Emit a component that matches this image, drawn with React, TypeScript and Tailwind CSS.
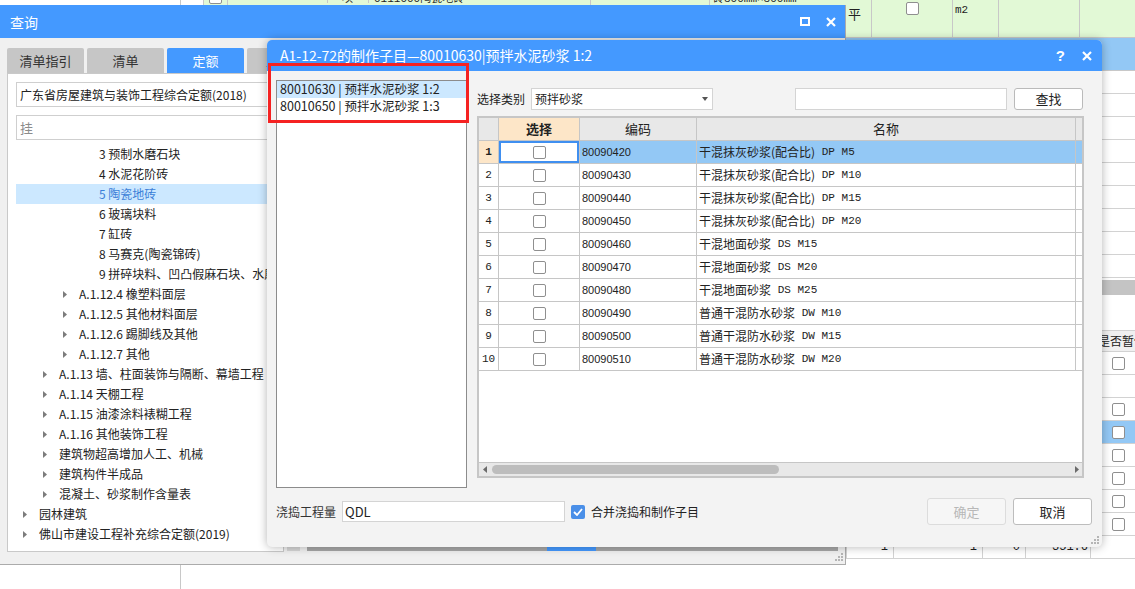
import React from "react";

type TreeItem = { level: number; text: string; arrow?: boolean; active?: boolean };

const treeItems: TreeItem[] = [
  { level: 3, text: "3 预制水磨石块" },
  { level: 3, text: "4 水泥花阶砖" },
  { level: 3, text: "5 陶瓷地砖", active: true },
  { level: 3, text: "6 玻璃块料" },
  { level: 3, text: "7 缸砖" },
  { level: 3, text: "8 马赛克(陶瓷锦砖)" },
  { level: 3, text: "9 拼碎块料、凹凸假麻石块、水磨石" },
  { level: 2, text: "A.1.12.4 橡塑料面层", arrow: true },
  { level: 2, text: "A.1.12.5 其他材料面层", arrow: true },
  { level: 2, text: "A.1.12.6 踢脚线及其他", arrow: true },
  { level: 2, text: "A.1.12.7 其他", arrow: true },
  { level: 1, text: "A.1.13 墙、柱面装饰与隔断、幕墙工程", arrow: true },
  { level: 1, text: "A.1.14 天棚工程", arrow: true },
  { level: 1, text: "A.1.15 油漆涂料裱糊工程", arrow: true },
  { level: 1, text: "A.1.16 其他装饰工程", arrow: true },
  { level: 1, text: "建筑物超高增加人工、机械", arrow: true },
  { level: 1, text: "建筑构件半成品", arrow: true },
  { level: 1, text: "混凝土、砂浆制作含量表", arrow: true },
  { level: 0, text: "园林建筑", arrow: true },
  { level: 0, text: "佛山市建设工程补充综合定额(2019)", arrow: true },
];

const indent = ["pl-[7px]", "pl-[27px]", "pl-[47px]", "pl-[67px]"];

const rows = [
  ["80090420", "干混抹灰砂浆(配合比)", "DP M5"],
  ["80090430", "干混抹灰砂浆(配合比)", "DP M10"],
  ["80090440", "干混抹灰砂浆(配合比)", "DP M15"],
  ["80090450", "干混抹灰砂浆(配合比)", "DP M20"],
  ["80090460", "干混地面砂浆", "DS M15"],
  ["80090470", "干混地面砂浆", "DS M20"],
  ["80090480", "干混地面砂浆", "DS M25"],
  ["80090490", "普通干混防水砂浆", "DW M10"],
  ["80090500", "普通干混防水砂浆", "DW M15"],
  ["80090510", "普通干混防水砂浆", "DW M20"],
];

const Box = () => (
  <span className="block h-[13px] w-[13px] rounded-[2px] border border-[#8f8f8f] bg-white" />
);

const XMark = () => (
  <svg width="10" height="10" viewBox="0 0 10 10">
    <path d="M1 1 L9 9 M9 1 L1 9" stroke="white" strokeWidth="2.2" />
  </svg>
);

const Grip = ({ className }: { className: string }) => (
  <svg className={className} width="8" height="8" viewBox="0 0 8 8">
    {[
      [6, 0],
      [3, 3],
      [6, 3],
      [0, 6],
      [3, 6],
      [6, 6],
    ].map(([x, y]) => (
      <rect key={`${x}-${y}`} x={x} y={y} width="2" height="2" fill="#b5b5b5" />
    ))}
  </svg>
);

// the application window behind both dialogs
function BackgroundApp() {
  return (
    <div className="absolute inset-0 flex flex-col bg-white font-['Liberation_Mono',monospace] text-[11px] text-[#222]">
      <div className="flex h-[38px] shrink-0">
        <div className="w-[181px] shrink-0 border-r border-[#c8c8c8]" />
        <div className="w-[22px] shrink-0" />
        <div className="flex flex-1 items-start overflow-hidden border-b border-[#c8c8c8] bg-[#e2f9d6] leading-[12px]">
          <div className="flex h-full w-[25px] shrink-0 justify-center border-x border-[#c8c8c8]">
            <span className="-mt-[9px] block h-[13px] w-[13px] rounded-[2px] border border-[#8f8f8f] bg-white" />
          </div>
          <div className="-mt-[9px] w-[100px] shrink-0 border-r border-[#c8c8c8] pl-[4px]">0111000000001</div>
          <div className="-mt-[9px] w-[41px] shrink-0 border-r border-[#c8c8c8] pl-[14px] font-['Noto_Sans_CJK_SC']">项</div>
          <div className="-mt-[9px] w-[222px] shrink-0 border-r border-[#c8c8c8] pl-[5px]">
            0111000<span className="font-['Noto_Sans_CJK_SC']">陶瓷地砖</span>
          </div>
          <div className="h-full w-[119px] shrink-0 border-r border-[#c8c8c8]" />
          <div className="-mt-[9px] w-[136px] shrink-0 pl-[3px]">
            <span className="font-['Noto_Sans_CJK_SC']">砖</span>300mm×300mm
          </div>
          <div className="h-full w-[26px] shrink-0 border-r border-[#c8c8c8] pt-[8px] pl-[2px] font-['Noto_Sans_CJK_SC'] text-[13px]">
            平
          </div>
          <div className="flex h-full w-[81px] shrink-0 justify-center border-r border-[#c8c8c8] pt-[2px]">
            <Box />
          </div>
          <div className="h-full w-[46px] shrink-0 border-r border-[#c8c8c8] pt-[4px] pl-[2px]">m2</div>
          <div className="h-full w-[81px] shrink-0 border-r border-[#c8c8c8]" />
          <div className="flex-1" />
        </div>
      </div>
      <div className="flex h-[33px] shrink-0">
        <div className="w-[846px] shrink-0" />
        <div className="flex-1 border-b border-[#c8c8c8] bg-[#93c8f5]" />
      </div>
      {Array.from({ length: 9 }).map((_, i) => (
        <div key={i} className="flex h-[23px] shrink-0">
          <div className="w-[846px] shrink-0" />
          <div className="flex-1 border-b border-[#d2d2d2]" />
        </div>
      ))}
      <div className="h-[2px] shrink-0" />
      <div className="flex h-[15px] shrink-0">
        <div className="w-[846px] shrink-0" />
        <div className="flex-1 bg-[#c4c4c4]" />
      </div>
      <div className="h-[35px] shrink-0" />
      <div className="flex h-[22px] shrink-0">
        <div className="w-[1090px] shrink-0" />
        <div className="flex flex-1 items-center whitespace-nowrap border-y border-[#d2d2d2] bg-[#f0f0f0] pl-[8px] font-['Noto_Sans_CJK_SC'] text-[12px]">
          是否暂估
        </div>
      </div>
      {Array.from({ length: 8 }).map((_, i) => (
        <div key={i} className="flex h-[23px] shrink-0">
          <div className="w-[1090px] shrink-0" />
          <div
            className={`flex flex-1 items-center justify-center border-b border-l border-[#d2d2d2] pl-[10px] ${
              i === 3 ? "bg-[#93c8f5]" : ""
            }`}
          >
            {i !== 1 && <Box />}
          </div>
        </div>
      ))}
      <div className="flex h-[23px] shrink-0 text-[12px]">
        <div className="w-[846px] shrink-0" />
        <div className="flex w-[47px] shrink-0 items-center justify-end border-b border-l border-[#d2d2d2] pr-[5px]">1</div>
        <div className="flex w-[89px] shrink-0 items-center justify-end border-b border-l border-[#d2d2d2] pr-[5px]">1</div>
        <div className="flex w-[43px] shrink-0 items-center justify-end border-b border-l border-[#d2d2d2] pr-[5px]">0</div>
        <div className="flex w-[65px] shrink-0 items-center justify-end border-b border-l border-[#d2d2d2] pr-[2px]">351.6</div>
        <div className="flex-1 border-b border-l border-[#d2d2d2]" />
      </div>
      <div className="flex flex-1">
        <div className="w-[181px] shrink-0 border-r border-[#c8c8c8]" />
      </div>
    </div>
  );
}

function QueryWindow() {
  const tabs = ["清单指引", "清单", "定额", "人材机"];
  return (
    <div className="absolute left-0 top-[5px] flex h-[560px] w-[846px] flex-col border-b border-r border-[#ababab] bg-[#f0f0f0]">
      <div className="flex h-[33px] shrink-0 items-center justify-between bg-[#4499ff] pl-[10px] pr-[9px] text-white">
        <span className="text-[14px] leading-none">查询</span>
        <div className="flex items-center gap-[16px]">
          <span className="block h-[9px] w-[10px] border-2 border-white" />
          <XMark />
        </div>
      </div>
      <div className="flex flex-1 items-start gap-[3px] px-[7px] pt-[10px]">
        <div className="flex w-[277px] shrink-0 flex-col">
          <div className="flex h-[25px] gap-[3px] text-[13px]">
            {tabs.map((t) => (
              <div
                key={t}
                className={`flex w-[77px] shrink-0 items-center justify-center rounded-t-[2px] ${
                  t === "定额" ? "bg-[#4499ff] text-white" : "bg-[#c6c6c6] text-[#333]"
                }`}
              >
                {t}
              </div>
            ))}
          </div>
          <div className="flex h-[479px] flex-col overflow-hidden border border-[#c9c9c9] bg-white px-[8px] pt-[8px]">
            <div className="flex h-[25px] shrink-0 items-center whitespace-nowrap border border-[#cfcfcf] px-[3px] text-[12px]">
              广东省房屋建筑与装饰工程综合定额(2018)
            </div>
            <div className="mt-[8px] flex h-[25px] shrink-0 items-center border border-[#cfcfcf] px-[3px] text-[13px] text-[#8c8c8c]">
              挂
            </div>
            <div className="mt-[4px] flex flex-col text-[12px]">
              {treeItems.map((it) => (
                <div
                  key={it.text}
                  className={`flex h-[20px] shrink-0 items-center whitespace-nowrap ${indent[it.level]} ${
                    it.active ? "bg-[#cce8ff] text-[#3b7fd8]" : "text-[#222]"
                  }`}
                >
                  {it.arrow ? (
                    <svg className="mr-[12px] shrink-0" width="4" height="7" viewBox="0 0 4 7">
                      <polygon points="0,0 4,3.5 0,7" fill="#7c7c7c" />
                    </svg>
                  ) : (
                    <span className="w-[16px] shrink-0" />
                  )}
                  {it.text}
                </div>
              ))}
            </div>
          </div>
        </div>
        <div className="flex h-[503px] flex-1 flex-col justify-end">
          <div className="flex h-[5px]">
            <div className="w-[13px] bg-[#d6d6d6]" />
            <div className="w-[7px]" />
            <div className="w-[240px] bg-[#a7a7a7]" />
            <div className="w-[49px] bg-[#4499ff]" />
            <div className="flex-1 bg-[#a7a7a7]" />
          </div>
        </div>
      </div>
      <Grip className="absolute bottom-[3px] right-[2px]" />
    </div>
  );
}

function SubItemDialog() {
  return (
    <div className="absolute left-[267px] top-[40px] flex h-[507px] w-[835px] flex-col overflow-hidden rounded-[5px] bg-[#f3f3f3] shadow-[0_0_10px_rgba(0,0,0,0.3)]">
      <div className="flex h-[31px] shrink-0 items-center justify-between bg-[#4499ff] pl-[13px] pr-[10px] text-white">
        <span className="whitespace-nowrap text-[14px]">A1-12-72的制作子目—80010630|预拌水泥砂浆 1:2</span>
        <div className="flex items-center gap-[17px]">
          <span className="font-['Liberation_Sans',sans-serif] text-[15px] font-bold leading-none">?</span>
          <XMark />
        </div>
      </div>
      <div className="flex flex-1 flex-col pl-[9px] pr-[10px] pt-[9px]">
        <div className="flex h-[408px] shrink-0 gap-[10px]">
          <div className="flex w-[191px] shrink-0 flex-col border border-[#8c8c8c] bg-white text-[12.5px]">
            <div className="flex h-[17px] items-center bg-[#cce8ff] pl-[3px] whitespace-nowrap">80010630 | 预拌水泥砂浆 1:2</div>
            <div className="flex h-[17px] items-center pl-[3px] whitespace-nowrap">80010650 | 预拌水泥砂浆 1:3</div>
          </div>
          <div className="flex flex-1 flex-col pr-[8px]">
            <div className="mt-[8px] flex h-[22px] shrink-0 items-center text-[12px]">
              <span className="w-[54px] shrink-0">选择类别</span>
              <div className="flex h-[22px] w-[182px] shrink-0 items-center justify-between border border-[#d4d4d4] bg-white pl-[3px] pr-[4px]">
                <span>预拌砂浆</span>
                <svg width="6" height="4" viewBox="0 0 6 4">
                  <polygon points="0,0 6,0 3,4" fill="#555" />
                </svg>
              </div>
              <div className="flex-1" />
              <div className="h-[22px] w-[212px] shrink-0 border border-[#d4d4d4] bg-white" />
              <div className="ml-[7px] mr-[1px] flex h-[22px] w-[69px] shrink-0 items-center justify-center rounded-[3px] border border-[#bababa] bg-white text-[13px]">
                查找
              </div>
            </div>
            <div className="mt-[6px] flex h-[362px] flex-col border-2 border-[#c6c6c6] bg-white">
              <div className="flex h-[23px] shrink-0 border-b border-[#c6c6c6] bg-[#e8e8e8] text-[13px]">
                <div className="w-[20px] shrink-0 border-r border-[#c6c6c6]" />
                <div className="flex w-[81px] shrink-0 items-center justify-center border-r border-[#c6c6c6] bg-[#fde6c8] font-bold">
                  选择
                </div>
                <div className="flex w-[117px] shrink-0 items-center justify-center border-r border-[#c6c6c6]">编码</div>
                <div className="flex w-[379px] shrink-0 items-center justify-center border-r border-[#c6c6c6]">名称</div>
                <div className="flex-1" />
              </div>
              {rows.map(([code, name, grade], i) => {
                const sel = i === 0;
                return (
                  <div
                    key={code}
                    className={`flex h-[23px] shrink-0 border-b border-[#c6c6c6] ${sel ? "bg-[#93c8f5]" : "bg-white"}`}
                  >
                    <div
                      className={`flex w-[20px] shrink-0 items-center justify-center border-r border-[#c6c6c6] font-['Liberation_Mono',monospace] text-[11px] ${
                        sel ? "bg-[#fde6c8] font-bold" : "bg-white"
                      }`}
                    >
                      {i + 1}
                    </div>
                    <div
                      className={`flex w-[81px] shrink-0 items-center justify-center border-r border-[#c6c6c6] bg-white ${
                        sel ? "shadow-[inset_0_0_0_2px_#3f8ff0]" : ""
                      }`}
                    >
                      <Box />
                    </div>
                    <div className="flex w-[117px] shrink-0 items-center border-r border-[#c6c6c6] pl-[2px] font-['Liberation_Sans',sans-serif] text-[11px]">
                      {code}
                    </div>
                    <div className="flex w-[379px] shrink-0 items-center whitespace-nowrap border-r border-[#c6c6c6] pl-[2px]">
                      <span className="text-[12px]">{name}</span>
                      <span className="font-['Liberation_Mono',monospace] text-[11px]">&nbsp;{grade}</span>
                    </div>
                    <div className="flex-1" />
                  </div>
                );
              })}
              <div className="flex-1" />
              <div className="flex h-[14px] shrink-0 items-center border-t border-[#c6c6c6] bg-[#e8e8e8] pl-[4px] pr-[3px]">
                <svg width="4" height="7" viewBox="0 0 4 7">
                  <polygon points="4,0 0,3.5 4,7" fill="#6b6b6b" />
                </svg>
                <div className="ml-[5px] h-[9px] w-[287px] rounded-full bg-[#bdbdbd]" />
                <div className="flex-1" />
                <svg width="4" height="7" viewBox="0 0 4 7">
                  <polygon points="0,0 4,3.5 0,7" fill="#6b6b6b" />
                </svg>
              </div>
            </div>
          </div>
        </div>
        <div className="mt-[10px] flex h-[27px] shrink-0 items-center text-[12px]">
          <span className="text-[#333]">浇捣工程量</span>
          <div className="ml-[6px] flex h-[21px] w-[223px] items-center border border-[#d4d4d4] bg-white pl-[2px] text-[13px]">
            QDL
          </div>
          <span className="ml-[6px] flex h-[14px] w-[14px] items-center justify-center rounded-[2px] bg-[#4a8fe8]">
            <svg width="10" height="8" viewBox="0 0 10 8">
              <path d="M1 4 L4 7 L9 1" stroke="white" strokeWidth="1.8" fill="none" />
            </svg>
          </span>
          <span className="ml-[6px]">合并浇捣和制作子目</span>
          <div className="flex-1" />
          <div className="flex h-[27px] w-[79px] items-center justify-center rounded-[3px] border border-[#dcdcdc] bg-[#f6f6f6] text-[13px] text-[#b8b8b8]">
            确定
          </div>
          <div className="ml-[7px] flex h-[27px] w-[79px] items-center justify-center rounded-[3px] border border-[#bdbdbd] bg-white text-[13px]">
            取消
          </div>
        </div>
      </div>
      <Grip className="absolute bottom-[3px] right-[3px]" />
    </div>
  );
}

export default function App() {
  return (
    <div className="relative h-[589px] w-[1135px] overflow-hidden bg-white font-['Noto_Sans_CJK_SC',sans-serif] text-[#222]">
      <BackgroundApp />
      <QueryWindow />
      <SubItemDialog />
      <div className="pointer-events-none absolute left-[268px] top-[63px] h-[60px] w-[201px] border-[3px] border-[#f52222]" />
    </div>
  );
}
